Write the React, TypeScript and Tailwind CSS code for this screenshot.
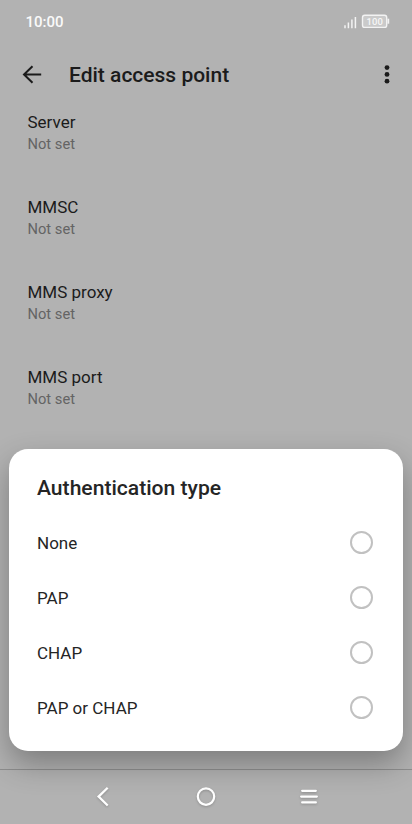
const settings = ["Server", "MMSC", "MMS proxy", "MMS port"];
const options = ["None", "PAP", "CHAP", "PAP or CHAP"];

function StatusBar() {
  return (
    <div className="flex h-11 items-center justify-between pl-[25.5px] pr-[22px] text-white">
      <span className="text-[15px] leading-5 font-medium text-[#fafafa]">10:00</span>
      <svg width="48" height="16" viewBox="0 0 48 16" fill="none">
        <path d="M3 11.2v3M6.4 8.6v5.6M9.9 5.5v8.7M13.4 3v11.2" stroke="#f3f3f3" strokeWidth="1.5" />
        <rect x="20.5" y="1.2" width="24.2" height="12.2" rx="2.2" fill="#cacaca" stroke="#f3f3f3" strokeWidth="1.4" />
        <path d="M45.5 4.7h1.7v5h-1.7z" fill="#f3f3f3" />
        <text x="32.7" y="11" textAnchor="middle" fontFamily="Roboto, sans-serif" fontSize="9.5" fontWeight="500" fill="#f6f6f6">100</text>
      </svg>
    </div>
  );
}

function AppBar() {
  return (
    <header className="flex h-[62px] items-center pl-[22px] pr-[22px]">
      <svg width="20" height="20" viewBox="0 0 20 20" fill="none" stroke="#1b1b1b" strokeWidth="2">
        <path d="M10.5 1.2 2 9.5l8.5 8.3M2 9.5h17.2" />
      </svg>
      <h1 className="ml-[27px] flex-1 text-[21px] leading-7 font-medium">Edit access point</h1>
      <svg width="6" height="20" viewBox="0 0 6 20" fill="#1b1b1b">
        <circle cx="3" cy="2.6" r="2.4" />
        <circle cx="3" cy="9.4" r="2.4" />
        <circle cx="3" cy="16.2" r="2.4" />
      </svg>
    </header>
  );
}

function AuthDialog() {
  return (
    <section
      role="dialog"
      className="absolute top-[449px] left-[9px] h-[302px] w-[394px] rounded-[19px] bg-white pl-[28px] pr-[30px] pt-6 text-[#252525] shadow-[0_13px_30px_rgba(0,0,0,0.3)]"
    >
      <h2 className="text-[21.1px] leading-[30px] font-medium">Authentication type</h2>
      <div className="mt-3">
        {options.map((option) => (
          <label key={option} className="flex h-[55px] items-center justify-between text-[17px]">
            <span className="pt-0.5">{option}</span>
            <span className="size-[23px] rounded-full border-2 border-[#c1c1c1]" />
          </label>
        ))}
      </div>
    </section>
  );
}

function NavBar() {
  return (
    <nav className="flex h-[55px] items-center justify-center gap-[79px] border-t border-[#8e8e8e]">
      <svg className="drop-shadow-[0_1px_1px_rgba(0,0,0,0.2)]" width="24" height="24" viewBox="0 0 24 24" fill="none" stroke="#fff" strokeWidth="2.3">
        <path d="M16.7 2.7 7.6 11.6l9.1 8.9" />
      </svg>
      <svg className="drop-shadow-[0_1px_1px_rgba(0,0,0,0.2)]" width="24" height="24" viewBox="0 0 24 24" fill="none" stroke="#fff" strokeWidth="2.2">
        <circle cx="12" cy="11.6" r="8.2" />
      </svg>
      <svg className="drop-shadow-[0_1px_1px_rgba(0,0,0,0.2)]" width="24" height="24" viewBox="0 0 24 24" fill="none" stroke="#fff" strokeWidth="2.3" strokeLinecap="round">
        <path d="M5.2 5.8h13.6M4.2 11.6h15.6M5.2 17.4h13.6" />
      </svg>
    </nav>
  );
}

export default function App() {
  return (
    <div className="relative flex h-[824px] w-[412px] flex-col overflow-hidden bg-[#b2b2b2] font-['Roboto',sans-serif] text-[#1b1b1b]">
      <StatusBar />
      <AppBar />
      <main className="flex-1 pl-[27.5px] pt-[4.6px]">
        {settings.map((name) => (
          <div key={name} className="h-[85.2px]">
            <div className="text-[17px] leading-[22px]">{name}</div>
            <div className="text-[14.7px] leading-[22px] text-[#646464]">Not set</div>
          </div>
        ))}
      </main>
      <NavBar />
      <AuthDialog />
    </div>
  );
}
